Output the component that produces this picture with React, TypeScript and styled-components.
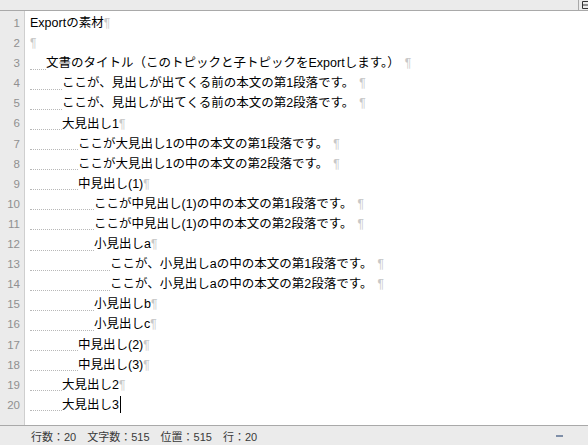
import styled, { createGlobalStyle } from 'styled-components';

const GlobalStyle = createGlobalStyle`
  html, body {
    margin: 0;
    padding: 0;
    background: #ffffff;
  }
  body {
    font-family: "Liberation Sans", "Noto Sans CJK JP", sans-serif;
  }
`;

const Window = styled.div`
  width: 588px;
  height: 445px;
  display: flex;
  flex-direction: column;
  overflow: hidden;
  background: #ffffff;
`;

const TopBar = styled.div`
  height: 10px;
  flex: none;
  display: flex;
  justify-content: flex-end;
  background: #ebebeb;
  border-bottom: 1px solid #a9a9a9;
`;

const SplitButton = styled.div`
  width: 9px;
  border-left: 1px solid #a9a9a9;
  display: flex;
  align-items: center;
  justify-content: flex-end;
`;

const Editor = styled.div`
  flex: 1;
  display: flex;
  min-height: 0;
`;

const Gutter = styled.div`
  width: 25px;
  flex: none;
  background: #ebebeb;
  border-right: 1px solid #cfcfcf;
  padding-top: 2px;
  box-sizing: border-box;
`;

const LineNo = styled.div`
  height: 20.1px;
  line-height: 20px;
  padding-right: 4px;
  text-align: right;
  font-family: "Liberation Sans", sans-serif;
  font-size: 11.5px;
  color: #909090;
`;

const Text = styled.div`
  flex: 1;
  padding: 2px 0 0 5px;
`;

const Line = styled.div`
  height: 20.1px;
  line-height: 20px;
  display: flex;
  align-items: center;
  font-size: 12.5px;
  color: #000000;
  white-space: nowrap;
`;

const Indent = styled.span<{ $level: number }>`
  width: ${(p) => p.$level * 16}px;
  height: 13px;
  flex: none;
  box-sizing: border-box;
  border-bottom: 1px dotted #b8b8b8;
  align-self: center;
`;

const Pilcrow = styled.span<{ $gap: boolean }>`
  color: #c8c8c8;
  font-size: 12px;
  margin-left: ${(p) => (p.$gap ? 5 : 0)}px;
`;

const Caret = styled.span`
  width: 1px;
  height: 17px;
  margin-left: 1px;
  background: #000000;
`;

const StatusBar = styled.div`
  height: 19px;
  flex: none;
  display: flex;
  align-items: center;
  gap: 11px;
  padding: 0 25px 0 31px;
  background: #ebebeb;
  border-top: 1px solid #a9a9a9;
  font-size: 11px;
  color: #3a3a3a;
`;

const StatusItem = styled.span`
  white-space: nowrap;
`;

const StatusIcon = styled.span`
  margin-left: auto;
  width: 7px;
  height: 2px;
  background: #7f8fa8;
`;

type Row = { level: number; text: string; gap?: boolean; caret?: boolean };

const rows: Row[] = [
  { level: 0, text: 'Exportの素材' },
  { level: 0, text: '' },
  { level: 1, text: '文書のタイトル（このトピックと子トピックをExportします。）', gap: true },
  { level: 2, text: 'ここが、見出しが出てくる前の本文の第1段落です。', gap: true },
  { level: 2, text: 'ここが、見出しが出てくる前の本文の第2段落です。', gap: true },
  { level: 2, text: '大見出し1' },
  { level: 3, text: 'ここが大見出し1の中の本文の第1段落です。', gap: true },
  { level: 3, text: 'ここが大見出し1の中の本文の第2段落です。', gap: true },
  { level: 3, text: '中見出し(1)' },
  { level: 4, text: 'ここが中見出し(1)の中の本文の第1段落です。', gap: true },
  { level: 4, text: 'ここが中見出し(1)の中の本文の第2段落です。', gap: true },
  { level: 4, text: '小見出しa' },
  { level: 5, text: 'ここが、小見出しaの中の本文の第1段落です。', gap: true },
  { level: 5, text: 'ここが、小見出しaの中の本文の第2段落です。', gap: true },
  { level: 4, text: '小見出しb' },
  { level: 4, text: '小見出しc' },
  { level: 3, text: '中見出し(2)' },
  { level: 3, text: '中見出し(3)' },
  { level: 2, text: '大見出し2' },
  { level: 2, text: '大見出し3', caret: true },
];

const App = (): JSX.Element => {
  return (
    <Window>
      <GlobalStyle />
      <TopBar>
        <SplitButton>
          <svg width="6" height="8" viewBox="0 0 6 8">
            <path d="M0.5 0.5 H6 M0.5 0.5 V7.5 H6 M0.5 4 H6" stroke="#333" strokeWidth="1" fill="none" />
          </svg>
        </SplitButton>
      </TopBar>
      <Editor>
        <Gutter>
          {rows.map((_, i) => (
            <LineNo key={i}>{i + 1}</LineNo>
          ))}
        </Gutter>
        <Text>
          {rows.map((row, i) => (
            <Line key={i}>
              {row.level > 0 && <Indent $level={row.level} />}
              <span>{row.text}</span>
              {row.caret ? <Caret /> : <Pilcrow $gap={!!row.gap}>¶</Pilcrow>}
            </Line>
          ))}
        </Text>
      </Editor>
      <StatusBar>
        <StatusItem>行数：20</StatusItem>
        <StatusItem>文字数：515</StatusItem>
        <StatusItem>位置：515</StatusItem>
        <StatusItem>行：20</StatusItem>
        <StatusIcon />
      </StatusBar>
    </Window>
  );
};

export default App;
